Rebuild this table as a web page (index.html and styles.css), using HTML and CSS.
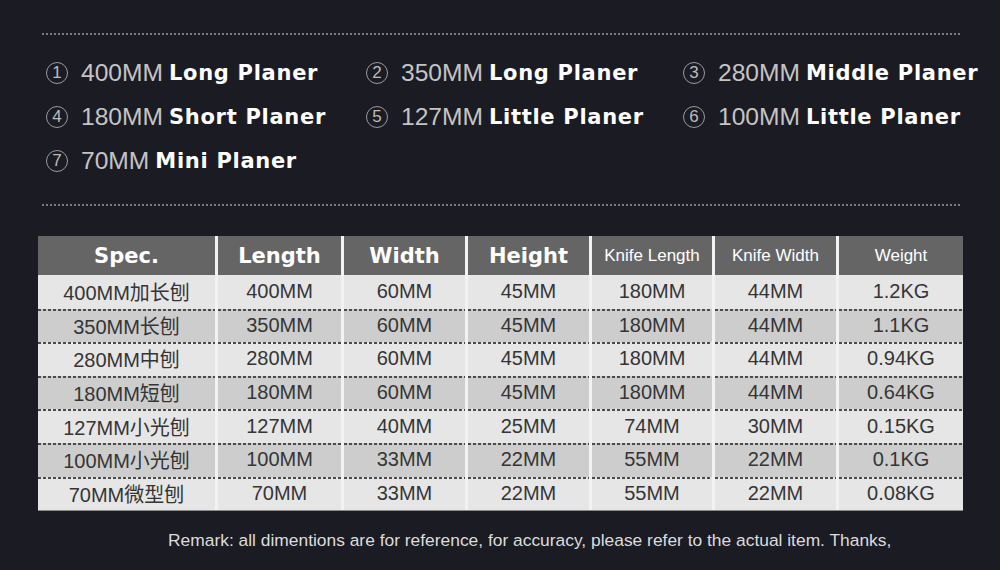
FILE: index.html
```html
<!DOCTYPE html>
<html>
<head>
<meta charset="utf-8">
<link rel="stylesheet" href="styles.css">
</head>
<body>
<div class="wrap">
  <div class="rule"></div>
  <div class="items">
    <div class="item"><span class="circ">1</span><span class="num">400MM</span><span class="lbl">Long Planer</span></div>
    <div class="item"><span class="circ">2</span><span class="num">350MM</span><span class="lbl">Long Planer</span></div>
    <div class="item"><span class="circ">3</span><span class="num">280MM</span><span class="lbl">Middle Planer</span></div>
    <div class="item"><span class="circ">4</span><span class="num">180MM</span><span class="lbl">Short Planer</span></div>
    <div class="item"><span class="circ">5</span><span class="num">127MM</span><span class="lbl">Little Planer</span></div>
    <div class="item"><span class="circ">6</span><span class="num">100MM</span><span class="lbl">Little Planer</span></div>
    <div class="item"><span class="circ">7</span><span class="num">70MM</span><span class="lbl">Mini Planer</span></div>
  </div>
  <div class="rule rule2"></div>
  <div class="table">
    <div class="th bold">Spec.</div>
    <div class="th bold">Length</div>
    <div class="th bold">Width</div>
    <div class="th bold">Height</div>
    <div class="th">Knife Length</div>
    <div class="th">Knife Width</div>
    <div class="th">Weight</div>

    <div class="td r1">400MM加长刨</div><div class="td r1">400MM</div><div class="td r1">60MM</div><div class="td r1">45MM</div><div class="td r1">180MM</div><div class="td r1">44MM</div><div class="td r1">1.2KG</div>
    <div class="td r2">350MM长刨</div><div class="td r2">350MM</div><div class="td r2">60MM</div><div class="td r2">45MM</div><div class="td r2">180MM</div><div class="td r2">44MM</div><div class="td r2">1.1KG</div>
    <div class="td r1 sep">280MM中刨</div><div class="td r1 sep">280MM</div><div class="td r1 sep">60MM</div><div class="td r1 sep">45MM</div><div class="td r1 sep">180MM</div><div class="td r1 sep">44MM</div><div class="td r1 sep">0.94KG</div>
    <div class="td r2">180MM短刨</div><div class="td r2">180MM</div><div class="td r2">60MM</div><div class="td r2">45MM</div><div class="td r2">180MM</div><div class="td r2">44MM</div><div class="td r2">0.64KG</div>
    <div class="td r1 sep">127MM小光刨</div><div class="td r1 sep">127MM</div><div class="td r1 sep">40MM</div><div class="td r1 sep">25MM</div><div class="td r1 sep">74MM</div><div class="td r1 sep">30MM</div><div class="td r1 sep">0.15KG</div>
    <div class="td r2">100MM小光刨</div><div class="td r2">100MM</div><div class="td r2">33MM</div><div class="td r2">22MM</div><div class="td r2">55MM</div><div class="td r2">22MM</div><div class="td r2">0.1KG</div>
    <div class="td r1 sep">70MM微型刨</div><div class="td r1 sep">70MM</div><div class="td r1 sep">33MM</div><div class="td r1 sep">22MM</div><div class="td r1 sep">55MM</div><div class="td r1 sep">22MM</div><div class="td r1 sep">0.08KG</div>
  </div>
  <p class="remark">Remark: all dimentions are for reference, for accuracy, please refer to the actual item. Thanks,</p>
</div>
</body>
</html>
```
FILE: styles.css
```css
html, body {
  margin: 0;
  padding: 0;
}
body {
  background: #1b1b24;
  width: 1000px;
  height: 570px;
  overflow: hidden;
  font-family: "Liberation Sans", Arial, sans-serif;
}
.wrap {
  padding: 33px 0 0 38px;
}
.rule {
  margin-left: 4px;
  width: 920px;
  height: 2px;
  background: repeating-linear-gradient(to right, #7a7a80 0 2px, transparent 2px 4px);
}
.items {
  display: grid;
  grid-template-columns: 320px 317px auto;
  grid-auto-rows: 44px;
  margin: 16px 0 0 8px;
}
.item {
  display: flex;
  align-items: center;
}
.circ {
  width: 20px;
  height: 20px;
  border: 1.5px solid #9a9a9a;
  border-radius: 50%;
  display: flex;
  align-items: center;
  justify-content: center;
  color: #bcbcbc;
  font-size: 17px;
  margin-right: 13px;
  flex: none;
}
.num {
  color: #c4c4c4;
  font-size: 24.6px;
  margin-right: 6px;
}
.lbl {
  color: #fff;
  font-family: "DejaVu Sans", Verdana, sans-serif;
  font-weight: bold;
  font-size: 21px;
  letter-spacing: 0.7px;
}
.rule2 {
  margin-top: 21px;
}
.table {
  margin-top: 30px;
  width: 925px;
  display: grid;
  grid-template-columns: 177px 123px 121px 121px 120px 121px 124px;
  grid-template-rows: 39px repeat(7, 33.6px);
  column-gap: 3px;
  background: #f2f2f2;
  border-bottom: 1px solid #8a8a8a;
}
.th {
  background: #656565;
  color: #fff;
  font-size: 17px;
  display: flex;
  align-items: center;
  justify-content: center;
}
.th.bold {
  font-family: "DejaVu Sans", Verdana, sans-serif;
  font-weight: bold;
  font-size: 21px;
}
.td {
  display: flex;
  align-items: center;
  justify-content: center;
  font-size: 20px;
  color: #353535;
  font-family: "Liberation Sans", "Noto Sans CJK SC", sans-serif;
}
.r1 {
  background-color: #e6e6e6;
}
.r2, .sep {
  background-image: repeating-linear-gradient(to right, #4a4a4a 0 3px, transparent 3px 5px);
  background-size: 100% 2px;
  background-position: top left;
  background-repeat: no-repeat;
}
.r2 {
  background-color: #cdcdcd;
}
.remark {
  margin: 19px 0 0 130px;
  color: #dcdcdc;
  font-size: 17.4px;
}
```
